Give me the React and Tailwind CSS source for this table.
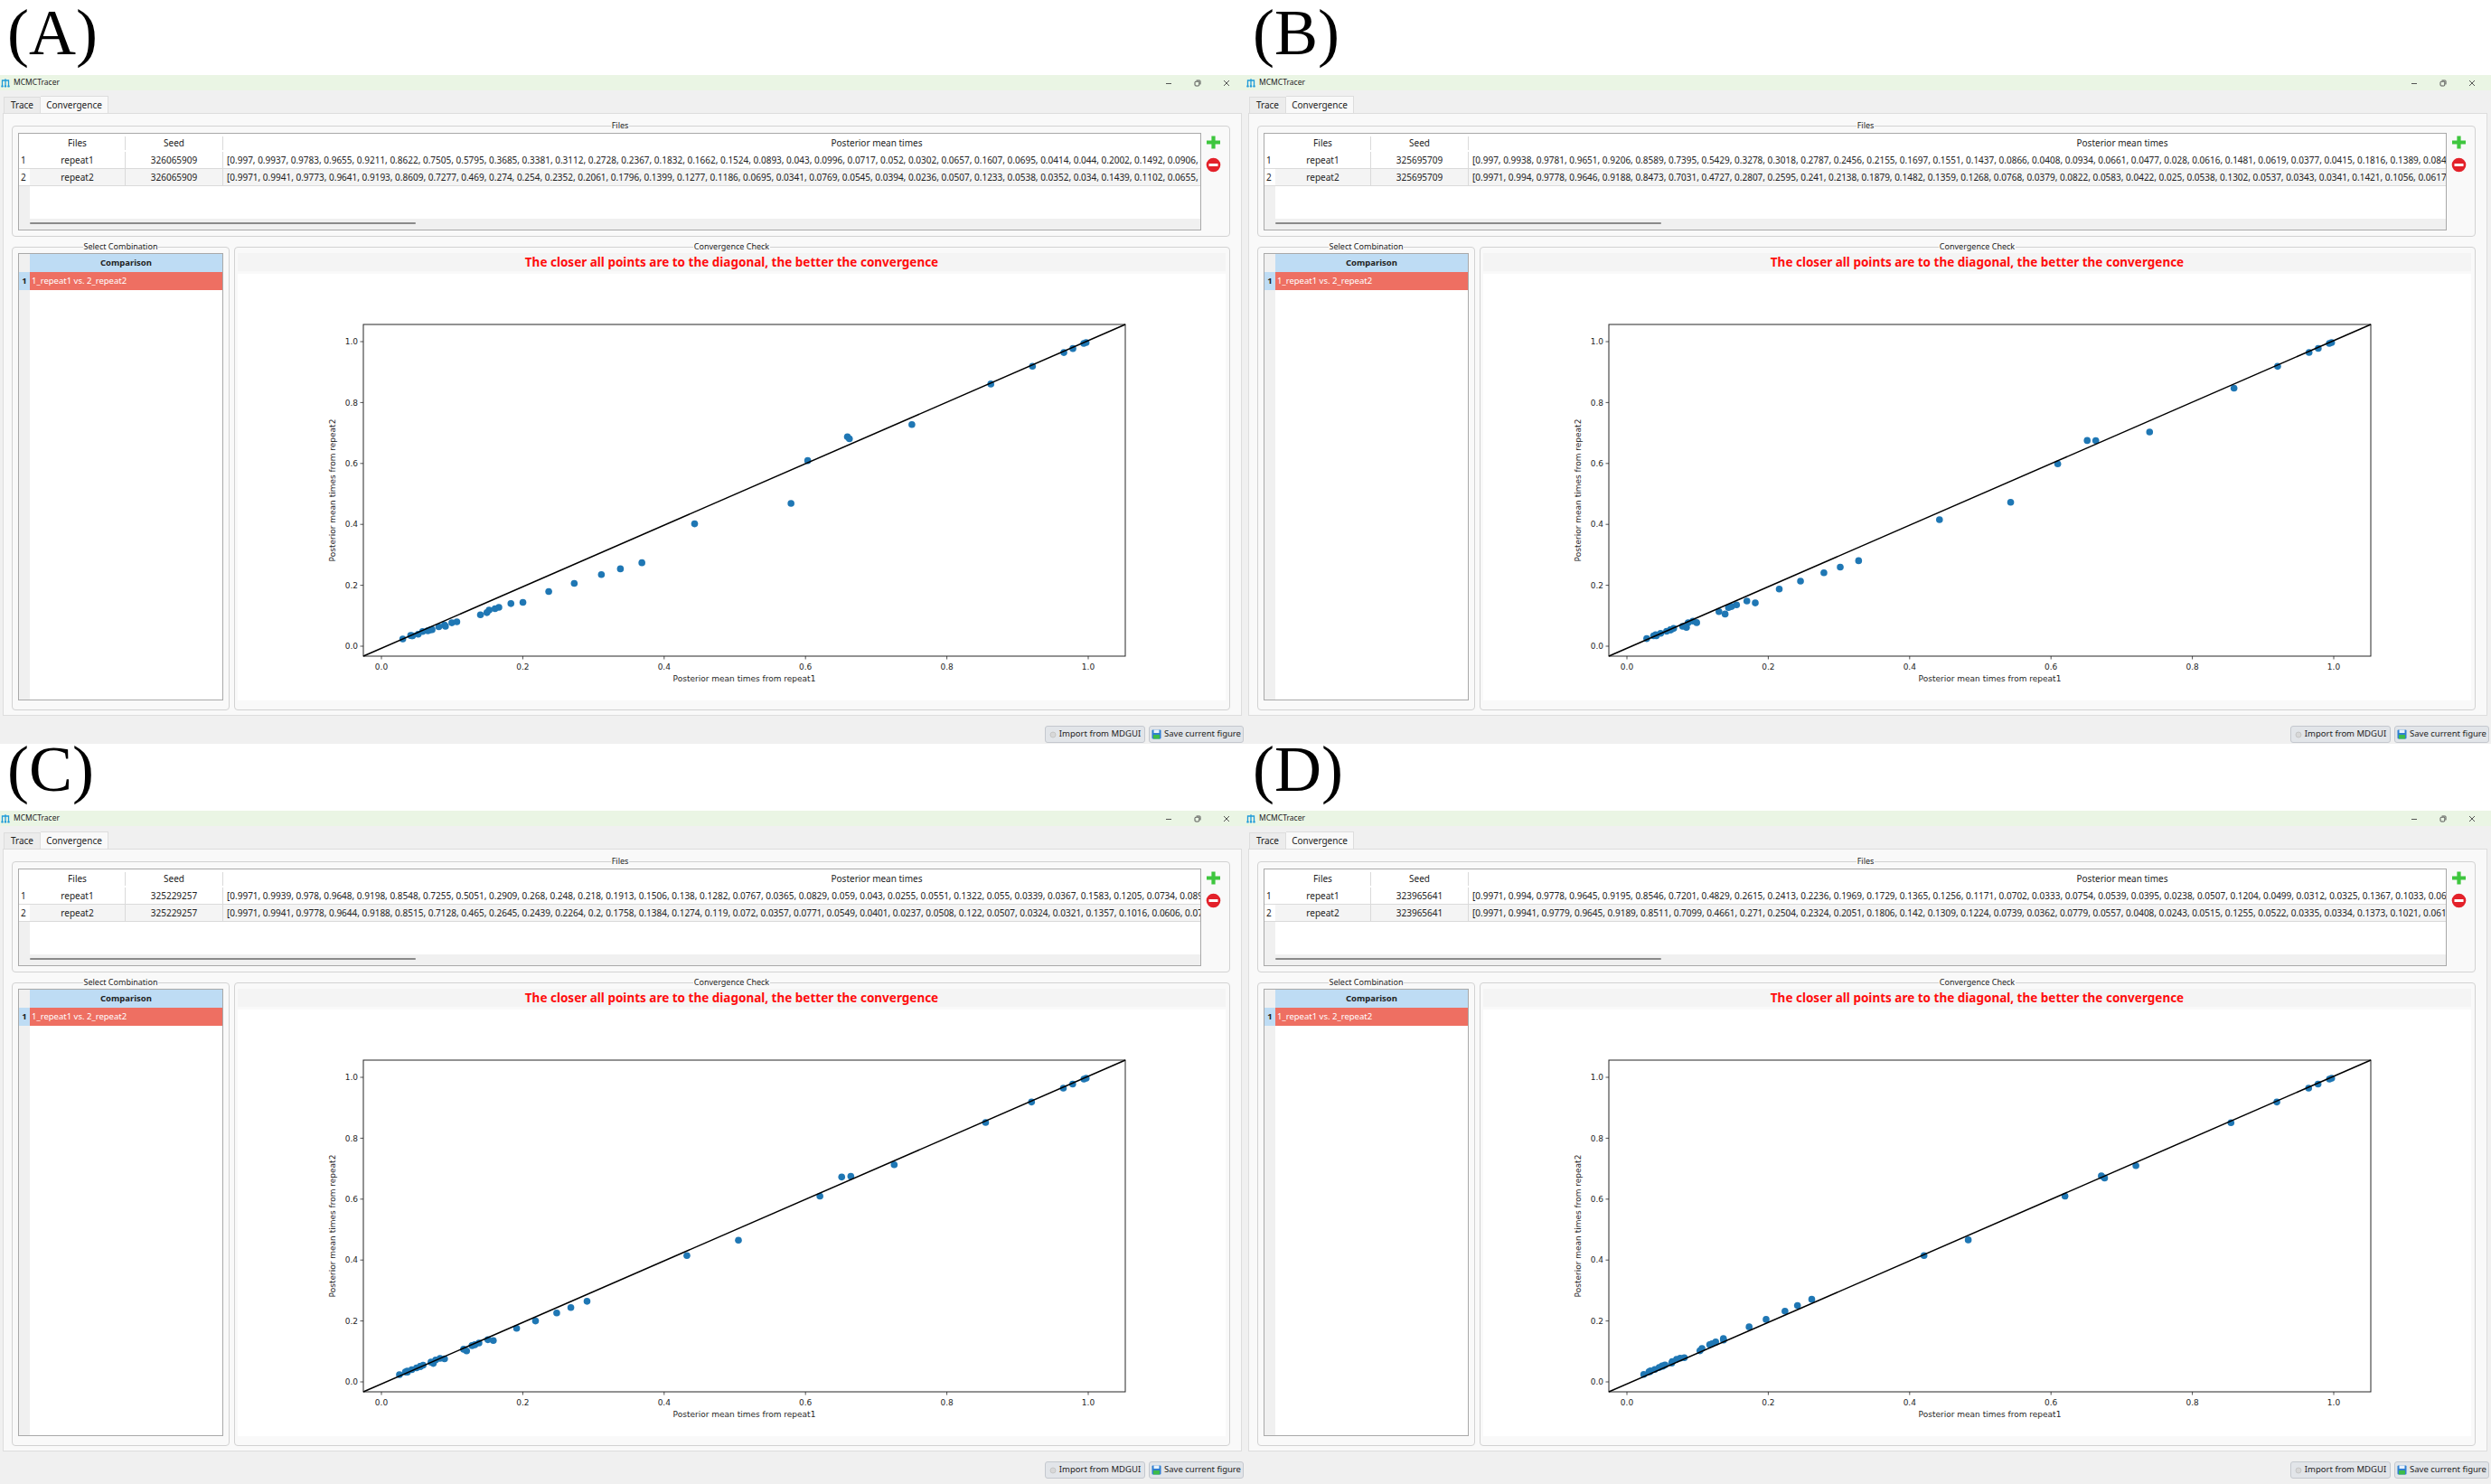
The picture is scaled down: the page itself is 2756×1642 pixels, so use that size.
import React from "react";

const panels = [
  {
    label: "(A)",
    labelCls: "h-[83px] leading-[72px]",
    winCls: "h-[740px]",
    seed: "326065909",
    r1: [0.997, 0.9937, 0.9783, 0.9655, 0.9211, 0.8622, 0.7505, 0.5795, 0.3685, 0.3381, 0.3112, 0.2728, 0.2367, 0.1832, 0.1662, 0.1524, 0.0893, 0.043, 0.0996, 0.0717, 0.052, 0.0302, 0.0657, 0.1607, 0.0695, 0.0414, 0.044, 0.2002, 0.1492, 0.0906, 0.1067, 0.6031, 0.6593, 0.6621, 0.4431, 0.1401, 0.0583, 0.0812],
    r2: [0.9971, 0.9941, 0.9773, 0.9641, 0.9193, 0.8609, 0.7277, 0.469, 0.274, 0.254, 0.2352, 0.2061, 0.1796, 0.1399, 0.1277, 0.1186, 0.0695, 0.0341, 0.0769, 0.0545, 0.0394, 0.0236, 0.0507, 0.1233, 0.0538, 0.0352, 0.034, 0.1439, 0.1102, 0.0655, 0.0801, 0.6093, 0.6874, 0.6812, 0.4018, 0.1032, 0.0481, 0.0637],
  },
  {
    label: "(B)",
    labelCls: "h-[83px] leading-[72px]",
    winCls: "h-[740px]",
    seed: "325695709",
    r1: [0.997, 0.9938, 0.9781, 0.9651, 0.9206, 0.8589, 0.7395, 0.5429, 0.3278, 0.3018, 0.2787, 0.2456, 0.2155, 0.1697, 0.1551, 0.1437, 0.0866, 0.0408, 0.0934, 0.0661, 0.0477, 0.028, 0.0616, 0.1481, 0.0619, 0.0377, 0.0415, 0.1816, 0.1389, 0.0842, 0.0987, 0.6095, 0.6512, 0.6633, 0.4422, 0.1302, 0.0561, 0.0788],
    r2: [0.9971, 0.994, 0.9778, 0.9646, 0.9188, 0.8473, 0.7031, 0.4727, 0.2807, 0.2595, 0.241, 0.2138, 0.1879, 0.1482, 0.1359, 0.1268, 0.0768, 0.0379, 0.0822, 0.0583, 0.0422, 0.025, 0.0538, 0.1302, 0.0537, 0.0343, 0.0341, 0.1421, 0.1056, 0.0617, 0.0774, 0.5987, 0.6754, 0.6748, 0.4153, 0.1134, 0.0489, 0.0652],
  },
  {
    label: "(C)",
    labelCls: "h-[74px] leading-[56px]",
    winCls: "h-[745px]",
    seed: "325229257",
    r1: [0.9971, 0.9939, 0.978, 0.9648, 0.9198, 0.8548, 0.7255, 0.5051, 0.2909, 0.268, 0.248, 0.218, 0.1913, 0.1506, 0.138, 0.1282, 0.0767, 0.0365, 0.0829, 0.059, 0.043, 0.0255, 0.0551, 0.1322, 0.055, 0.0339, 0.0367, 0.1583, 0.1205, 0.0734, 0.0893, 0.6204, 0.6512, 0.6641, 0.4322, 0.1163, 0.0497, 0.0701],
    r2: [0.9971, 0.9941, 0.9778, 0.9644, 0.9188, 0.8515, 0.7128, 0.465, 0.2645, 0.2439, 0.2264, 0.2, 0.1758, 0.1384, 0.1274, 0.119, 0.072, 0.0357, 0.0771, 0.0549, 0.0401, 0.0237, 0.0508, 0.122, 0.0507, 0.0324, 0.0321, 0.1357, 0.1016, 0.0606, 0.0755, 0.6097, 0.6726, 0.6748, 0.4146, 0.1071, 0.0462, 0.0648],
  },
  {
    label: "(D)",
    labelCls: "h-[74px] leading-[56px]",
    winCls: "h-[745px]",
    seed: "323965641",
    r1: [0.9971, 0.994, 0.9778, 0.9645, 0.9195, 0.8546, 0.7201, 0.4829, 0.2615, 0.2413, 0.2236, 0.1969, 0.1729, 0.1365, 0.1256, 0.1171, 0.0702, 0.0333, 0.0754, 0.0539, 0.0395, 0.0238, 0.0507, 0.1204, 0.0499, 0.0312, 0.0325, 0.1367, 0.1033, 0.0633, 0.0812, 0.6198, 0.6712, 0.6758, 0.4203, 0.1062, 0.0456, 0.0641],
    r2: [0.9971, 0.9941, 0.9779, 0.9645, 0.9189, 0.8511, 0.7099, 0.4661, 0.271, 0.2504, 0.2324, 0.2051, 0.1806, 0.142, 0.1309, 0.1224, 0.0739, 0.0362, 0.0779, 0.0557, 0.0408, 0.0243, 0.0515, 0.1255, 0.0522, 0.0335, 0.0334, 0.1373, 0.1021, 0.0616, 0.0795, 0.6097, 0.6762, 0.6695, 0.4148, 0.1098, 0.0472, 0.0663],
  },
];

function AppIcon() {
  return (
    <svg width="10" height="11" viewBox="0 0 10 11" className="shrink-0">
      <path d="M1.5 9V3H8.5V9M5 1.2V9" stroke="#1f9bd8" strokeWidth="1.3" fill="none" />
      <circle cx="1.5" cy="9.4" r="1.2" fill="#1f9bd8" />
      <circle cx="5" cy="9.4" r="1.2" fill="#1f9bd8" />
      <circle cx="8.5" cy="9.4" r="1.2" fill="#1f9bd8" />
    </svg>
  );
}

function TitleBar() {
  return (
    <div className="flex h-[17px] items-center bg-[#eaf5e4] pl-[1px] text-[8.5px] text-[#222]">
      <AppIcon />
      <span className="ml-[4px]">MCMCTracer</span>
      <div className="ml-auto flex h-full items-center pr-[5px] text-[#333]">
        <span className="flex w-[32px] justify-center">
          <svg width="8" height="8" viewBox="0 0 8 8"><path d="M1 4.5H7" stroke="#444" strokeWidth="0.9" /></svg>
        </span>
        <span className="flex w-[32px] justify-center">
          <svg width="8" height="8" viewBox="0 0 8 8">
            <rect x="1" y="2.2" width="4.8" height="4.8" rx="1" fill="none" stroke="#444" strokeWidth="0.9" />
            <path d="M2.6 1H6.2Q7 1 7 1.8V5.4" fill="none" stroke="#444" strokeWidth="0.9" />
          </svg>
        </span>
        <span className="flex w-[32px] justify-center">
          <svg width="8" height="8" viewBox="0 0 8 8"><path d="M1 1L7 7M7 1L1 7" stroke="#444" strokeWidth="0.9" /></svg>
        </span>
      </div>
    </div>
  );
}

function Tabs() {
  return (
    <div className="flex h-[25px] items-end pl-[4px] text-[10px] text-[#222]">
      <div className="flex h-[18px] w-[41px] items-center justify-center border border-b-0 border-[#dddddd] bg-[#ececec]">Trace</div>
      <div className="flex h-[19px] w-[75px] items-center justify-center border border-b-0 border-l-0 border-[#dddddd] bg-[#f9f9f9]">Convergence</div>
    </div>
  );
}

function FilesTable({ d }) {
  const rows = [
    ["1", "repeat1", d.r1, "bg-white"],
    ["2", "repeat2", d.r2, "bg-[#f4f4f4]"],
  ];
  return (
    <div className="flex h-[108px] min-w-0 flex-1 flex-col overflow-hidden border border-[#a9a9a9] bg-white text-[10px] text-[#222]">
      <div className="flex min-h-0 flex-1">
        <div className="flex w-[12px] shrink-0 flex-col bg-[#f0f0f0]">
          <div className="h-[20px] bg-white" />
          {rows.map((r) => (
            <div key={r[0]} className="flex h-[19px] items-center border-b border-[#dadada] bg-white pl-[2px]">{r[0]}</div>
          ))}
        </div>
        <div className="min-w-0 flex-1 overflow-hidden">
          <div className="w-[1660px]">
            <div className="grid h-[20px] grid-cols-[106px_108px_1446px] items-center">
              <div className="border-r border-[#dadada] text-center">Files</div>
              <div className="border-r border-[#dadada] text-center">Seed</div>
              <div className="text-center">Posterior mean times</div>
            </div>
            {rows.map((r) => (
              <div key={r[0]} className={`grid h-[19px] grid-cols-[106px_108px_1446px] items-center border-b border-[#dadada] ${r[3]}`}>
                <div className="flex h-full items-center justify-center border-r border-[#dadada]">{r[1]}</div>
                <div className="flex h-full items-center justify-center border-r border-[#dadada]">{d.seed}</div>
                <div className="overflow-hidden whitespace-nowrap pl-[4px]">[{r[2].join(", ")}]</div>
              </div>
            ))}
          </div>
        </div>
      </div>
      <div className="h-[12px] shrink-0 bg-[#f0f0f0] pt-[4px]">
        <div className="ml-[12px] h-[2px] w-[427px] rounded-full bg-[#8a8a8a]" />
      </div>
    </div>
  );
}

function FileButtons() {
  return (
    <div className="ml-[4px] flex w-[19px] shrink-0 flex-col items-center pt-[2px]">
      <svg width="19" height="17" viewBox="0 0 19 17">
        <path d="M9.5 1.5V15.5M2 8.5H17" stroke="#3ec63e" strokeWidth="4.2" />
      </svg>
      <svg width="17" height="17" viewBox="0 0 17 17" className="mt-[8px]">
        <circle cx="8.5" cy="8.5" r="7.8" fill="#e3212a" />
        <rect x="3.5" y="7" width="10" height="3" fill="#fff" />
      </svg>
    </div>
  );
}

function Plot({ xs, ys }) {
  const L = 139, R = 982, T = 56, B = 423;
  const px = (v) => 159 + v * 782;
  const py = (v) => 412 - v * 337;
  const ticks = ["0.0", "0.2", "0.4", "0.6", "0.8", "1.0"];
  return (
    <svg width="1094" height="472" className="block" fontFamily="DejaVu Sans, sans-serif">
      <rect x={L} y={T} width={R - L} height={B - T} fill="none" stroke="#262626" strokeWidth="1" />
      {ticks.map((t) => (
        <g key={"x" + t}>
          <line x1={px(+t)} y1={B} x2={px(+t)} y2={B + 3.5} stroke="#262626" strokeWidth="0.8" />
          <text x={px(+t)} y={B + 15} fontSize="9" textAnchor="middle" fill="#262626">{t}</text>
          <line x1={L - 3.5} y1={py(+t)} x2={L} y2={py(+t)} stroke="#262626" strokeWidth="0.8" />
          <text x={L - 6} y={py(+t) + 3.2} fontSize="9" textAnchor="end" fill="#262626">{t}</text>
        </g>
      ))}
      {xs.map((x, i) => (
        <circle key={i} cx={px(x)} cy={py(ys[i])} r="3.8" fill="#1f77b4" />
      ))}
      <line x1={L} y1={B} x2={R} y2={T} stroke="#000" strokeWidth="1.5" />
      <text x={(L + R) / 2} y={451} fontSize="9" textAnchor="middle" fill="#262626">Posterior mean times from repeat1</text>
      <text x={0} y={0} fontSize="9" textAnchor="middle" fill="#262626" transform={`translate(108 ${(T + B) / 2}) rotate(-90)`}>
        Posterior mean times from repeat2
      </text>
    </svg>
  );
}

function Group({ title, className, children }) {
  return (
    <fieldset className={`min-w-0 rounded-[4px] border border-[#d2d2d2] ${className}`}>
      <legend className="mx-auto px-[1px] text-[9px] leading-[12px] text-[#222]">{title}</legend>
      {children}
    </fieldset>
  );
}

function Window({ d }) {
  return (
    <div className="flex h-[740px] flex-col font-['Noto_Sans','Open_Sans',sans-serif]">
      <TitleBar />
      <Tabs />
      <div className="ml-[3px] mr-[4px] flex min-h-0 flex-1 flex-col border border-[#dddddd] bg-[#f9f9f9] pb-[5px] pl-[9px] pr-[12px] pt-[7px]">
        <Group title="Files" className="flex px-[6px] pb-[6px] pt-[2px] pr-[8px]">
          <FilesTable d={d} />
          <FileButtons />
        </Group>
        <div className="mt-[5px] flex min-h-0 flex-1 gap-[5px]">
          <Group title="Select Combination" className="flex w-[241px] shrink-0 flex-col px-[6px] pb-[10px] pt-[1px]">
            <div className="flex flex-1 flex-col border border-[#a9a9a9] bg-white text-[9.5px] text-[#222]">
              <div className="flex h-[20px]">
                <div className="w-[12px] bg-[#f0f0f0]" />
                <div className="flex flex-1 items-center justify-center bg-[#bedcf4] font-bold">Comparison</div>
              </div>
              <div className="flex h-[20px]">
                <div className="flex w-[12px] items-center justify-center bg-[#bedcf4] font-bold">1</div>
                <div className="flex flex-1 items-center bg-[#ee6f62] pl-[2px] text-white">1_repeat1 vs. 2_repeat2</div>
              </div>
              <div className="flex flex-1">
                <div className="w-[12px] bg-[#f0f0f0]" />
              </div>
            </div>
          </Group>
          <Group title="Convergence Check" className="flex flex-1 flex-col pb-[10px] pl-[3px] pr-[4px] pt-[1px]">
            <div className="flex h-[20px] items-center justify-center whitespace-nowrap bg-[#f4f4f4] text-[13.5px] font-bold text-[#ff0d0d]">
              The closer all points are to the diagonal, the better the convergence
            </div>
            <div className="mt-[3px] min-h-0 flex-1 overflow-hidden bg-white">
              <Plot xs={d.r1} ys={d.r2} />
            </div>
          </Group>
        </div>
      </div>
      <div className="flex h-[31px] items-start justify-end gap-[4px] pr-[2px] pt-[11px] text-[9.5px] text-[#222]">
        <button className="flex h-[19px] w-[111px] items-center justify-center gap-[3px] whitespace-nowrap rounded-[3px] border border-[#c4c8ce] bg-[#e2e5e9]">
          <svg width="8" height="8" viewBox="0 0 8 8">
            <circle cx="4" cy="4" r="3" fill="#d8d8d8" stroke="#c0c0c0" strokeWidth="0.8" />
          </svg>
          Import from MDGUI
        </button>
        <button className="flex h-[19px] w-[105px] items-center justify-center gap-[3px] whitespace-nowrap rounded-[3px] border border-[#c4c8ce] bg-[#e2e5e9]">
          <svg width="11" height="11" viewBox="0 0 11 11">
            <rect x="0.5" y="0.5" width="10" height="10" rx="1" fill="#2f7fd0" />
            <rect x="2.5" y="0.5" width="6" height="3.5" fill="#e8f2fb" />
            <rect x="2" y="6" width="7" height="4.5" fill="#3dbb4a" />
          </svg>
          Save current figure
        </button>
      </div>
    </div>
  );
}

function Quadrant({ d }) {
  return (
    <div className="flex flex-col">
      <div className={`pl-[8px] font-['Liberation_Serif',serif] text-[72px] text-black ${d.labelCls}`}>{d.label}</div>
      <div className={`bg-[#f0f0f0] ${d.winCls}`}>
        <Window d={d} />
      </div>
    </div>
  );
}

export default function App() {
  return (
    <div className="grid h-[1642px] w-[2756px] grid-cols-2 grid-rows-[823px_819px] overflow-hidden bg-white">
      {panels.map((d) => (
        <Quadrant key={d.label} d={d} />
      ))}
    </div>
  );
}
